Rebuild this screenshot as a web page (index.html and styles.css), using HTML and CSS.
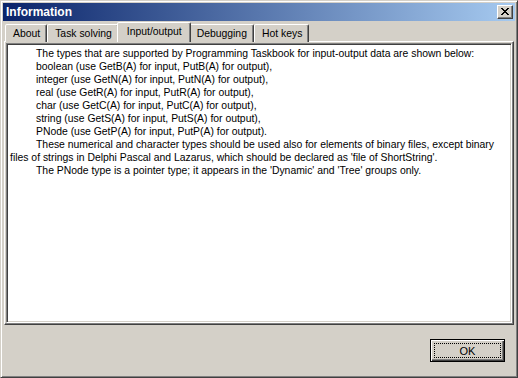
FILE: index.html
```html
<!DOCTYPE html>
<html lang="en">
<head>
  <meta charset="UTF-8" />
  <title>Information</title>
  <link rel="stylesheet" href="styles.css">
</head>
<body>
  <div class="window">
    <div class="titlebar">
      <span class="title">Information</span>
      <button class="close" title="Close">
        <svg width="8" height="7" viewBox="0 0 8 7">
          <path d="M0 0h2v1h-2zM6 0h2v1h-2zM1 1h2v1h-2zM5 1h2v1h-2zM2 2h4v1h-4zM3 3h2v1h-2zM2 4h4v1h-4zM1 5h2v1h-2zM5 5h2v1h-2zM0 6h2v1h-2zM6 6h2v1h-2z" fill="#000"/>
        </svg>
      </button>
    </div>

    <div class="tabs">
      <div class="tab">About</div>
      <div class="tab">Task solving</div>
      <div class="tab active">Input/output</div>
      <div class="tab">Debugging</div>
      <div class="tab">Hot keys</div>
    </div>

    <div class="panel">
      <div class="memo">
        <div class="ind">The types that are supported by Programming Taskbook for input-output data are shown below:</div>
        <div class="ind">boolean (use GetB(A) for input, PutB(A) for output),</div>
        <div class="ind">integer (use GetN(A) for input, PutN(A) for output),</div>
        <div class="ind">real (use GetR(A) for input, PutR(A) for output),</div>
        <div class="ind">char (use GetC(A) for input, PutC(A) for output),</div>
        <div class="ind">string (use GetS(A) for input, PutS(A) for output),</div>
        <div class="ind">PNode (use GetP(A) for input, PutP(A) for output).</div>
        <div class="ind">These numerical and character types should be used also for elements of binary files, except binary</div>
        <div>files of strings in Delphi Pascal and Lazarus, which should be declared as 'file of ShortString'.</div>
        <div class="ind">The PNode type is a pointer type; it appears in the 'Dynamic' and 'Tree' groups only.</div>
      </div>
    </div>

    <div class="footer">
      <button class="ok"><span>OK</span></button>
    </div>
  </div>
</body>
</html>
```

FILE: styles.css
```css
body {
  margin: 0;
  background: #d4d0c8;
  font-family: "Liberation Sans", Arial, sans-serif;
  font-size: 10.4px;
  color: #000;
}
.window {
  width: 518px;
  height: 378px;
  box-sizing: border-box;
  padding: 2px;
  border: 1px solid;
  border-color: #d4d0c8 #404040 #404040 #d4d0c8;
  box-shadow: inset 1px 1px #fff, inset -1px -1px #808080;
  background: #d4d0c8;
  display: flex;
  flex-direction: column;
}
.titlebar {
  height: 18px;
  display: flex;
  align-items: center;
  justify-content: space-between;
  padding: 0 2px 0 2px;
  background: linear-gradient(to right, #0a246a, #a6caf0);
}
.title {
  color: #fff;
  font-weight: bold;
  font-size: 12px;
  padding-left: 1px;
}
.close {
  width: 16px;
  height: 14px;
  padding: 0;
  box-sizing: border-box;
  background: #d4d0c8;
  border: 1px solid;
  border-color: #fff #404040 #404040 #fff;
  box-shadow: inset -1px -1px #808080;
  display: flex;
  align-items: center;
  justify-content: center;
}
.close svg {
  display: block;
  margin: 0 1px 1px 0;
}
.tabs {
  display: flex;
  align-items: flex-end;
  height: 20px;
  padding-left: 2px;
  position: relative;
  z-index: 1;
}
.tab {
  height: 17px;
  line-height: 17px;
  padding: 0 6px 0 7px;
  border: 1px solid;
  border-bottom: none;
  border-color: #fff #404040 transparent #fff;
  box-shadow: inset -1px 0 #808080;
  border-radius: 2px 2px 0 0;
  background: #d4d0c8;
  margin-bottom: -1px;
  white-space: nowrap;
}
.tab.active {
  height: 19px;
  line-height: 17px;
  margin: 0 -2px -1px;
  padding: 0 8px 0 9px;
  position: relative;
}
.panel {
  height: 284px;
  box-sizing: border-box;
  margin: 0 1px;
  padding: 1px;
  border: 1px solid;
  border-color: #fff #404040 #404040 #fff;
  box-shadow: inset -1px -1px #808080;
}
.memo {
  height: 100%;
  box-sizing: border-box;
  background: #fff;
  border: 1px solid;
  border-color: #808080 #fff #fff #808080;
  box-shadow: inset 1px 1px #404040, inset -1px -1px #d4d0c8;
  padding: 3px 2px 0 3px;
  line-height: 13px;
  white-space: nowrap;
  overflow: hidden;
}
.ind {
  padding-left: 26px;
}
.footer {
  flex: 1;
  display: flex;
  justify-content: flex-end;
  align-items: flex-start;
  padding: 14px 10px 0 0;
}
.ok {
  width: 75px;
  height: 23px;
  padding: 0;
  box-sizing: border-box;
  font: inherit;
  font-size: 11px;
  background: #d4d0c8;
  border: 1px solid #000;
  box-shadow: inset 1px 1px #fff, inset -1px -1px #404040, inset -2px -2px #808080;
  display: flex;
  align-items: stretch;
}
.ok span {
  flex: 1;
  margin: 3px;
  border: 1px dotted #000;
  display: flex;
  align-items: center;
  justify-content: center;
}
```
